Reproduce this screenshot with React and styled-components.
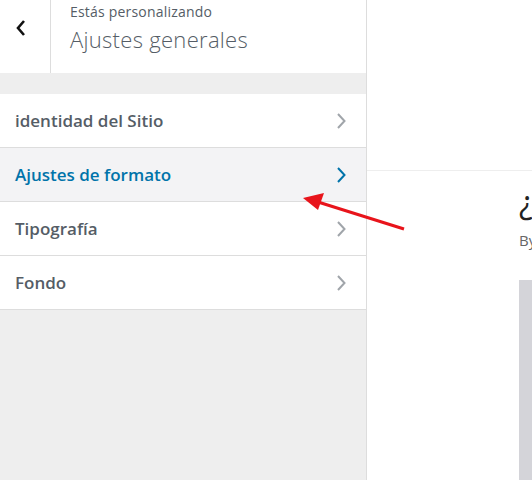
import React from "react";
import styled, { createGlobalStyle } from "styled-components";

const GlobalStyle = createGlobalStyle`
  html, body {
    margin: 0;
    padding: 0;
    width: 532px;
    height: 480px;
    overflow: hidden;
    background: #fff;
    font-family: "Open Sans", "Noto Sans", sans-serif;
  }
`;

const Page = styled.div`
  position: relative;
  display: flex;
  width: 532px;
  height: 480px;
  overflow: hidden;
`;

const Sidebar = styled.div`
  width: 366px;
  flex-shrink: 0;
  background: #eee;
  border-right: 1px solid #ddd;
  display: flex;
  flex-direction: column;
`;

const Header = styled.div`
  display: flex;
  height: 73px;
  background: #fff;
  margin-bottom: 21px;
`;

const BackButton = styled.button`
  width: 51px;
  flex-shrink: 0;
  border: none;
  border-right: 1px solid #ddd;
  background: #fff;
  padding: 0 9px 17px 0;
  display: flex;
  align-items: center;
  justify-content: center;
  cursor: pointer;
`;

const TitleBlock = styled.div`
  padding: 2px 0 0 19px;
  color: #555d66;
`;

const Caption = styled.div`
  font-size: 14px;
  letter-spacing: 0.2px;
  line-height: 20px;
`;

const Title = styled.div`
  font-size: 22px;
  font-weight: 300;
  letter-spacing: 0.3px;
  line-height: 30px;
  margin-top: 2px;
`;

const Item = styled.div`
  display: flex;
  align-items: center;
  justify-content: space-between;
  height: 53px;
  padding: 0 19px 0 15px;
  background: ${(p) => (p.active ? "#f3f3f5" : "#fff")};
  color: ${(p) => (p.active ? "#0073aa" : "#555d66")};
  border-bottom: 1px solid #ddd;
  font-size: 17px;
  font-weight: 600;
  cursor: pointer;
`;

const Preview = styled.div`
  flex: 1;
  display: flex;
  flex-direction: column;
  background: #fff;
`;

const PreviewTop = styled.div`
  height: 170px;
  border-bottom: 1px solid #eee;
`;

const PreviewBody = styled.div`
  padding: 12px 0 0 152px;
  overflow: hidden;
  flex: 1;
`;

const Heading = styled.div`
  font-size: 32px;
  color: #222;
  line-height: 38px;
  white-space: nowrap;
`;

const Byline = styled.div`
  font-size: 15px;
  color: #666;
  margin-top: 9px;
  white-space: nowrap;
`;

const ImageBlock = styled.div`
  margin-top: 30px;
  height: 200px;
  background: #d4d4d9;
`;

const Annotation = styled.svg`
  position: absolute;
  left: 0;
  top: 0;
  pointer-events: none;
`;

const Chevron = ({ color }) => (
  <svg width="12" height="18" viewBox="0 0 12 18">
    <path d="M3 2 L9.5 9 L3 16" fill="none" stroke={color} strokeWidth="2" />
  </svg>
);

const items = [
  { label: "identidad del Sitio" },
  { label: "Ajustes de formato", active: true },
  { label: "Tipografía" },
  { label: "Fondo" },
];

export default function App() {
  return (
    <>
      <GlobalStyle />
      <Page>
        <Sidebar>
          <Header>
            <BackButton>
              <svg width="12" height="18" viewBox="0 0 12 18">
                <path d="M9 2 L3 9 L9 16" fill="none" stroke="#111" strokeWidth="2.6" />
              </svg>
            </BackButton>
            <TitleBlock>
              <Caption>Estás personalizando</Caption>
              <Title>Ajustes generales</Title>
            </TitleBlock>
          </Header>
          {items.map((item) => (
            <Item key={item.label} active={item.active}>
              {item.label}
              <Chevron color={item.active ? "#0073aa" : "#a0a5aa"} />
            </Item>
          ))}
        </Sidebar>
        <Preview>
          <PreviewTop />
          <PreviewBody>
            <Heading>¿Qué</Heading>
            <Byline>By admin</Byline>
            <ImageBlock />
          </PreviewBody>
        </Preview>
        <Annotation width="532" height="480">
          <line x1="404" y1="229" x2="318" y2="202" stroke="#e8141b" strokeWidth="3" />
          <polygon points="303,198 324,193 318,210" fill="#e8141b" />
        </Annotation>
      </Page>
    </>
  );
}
